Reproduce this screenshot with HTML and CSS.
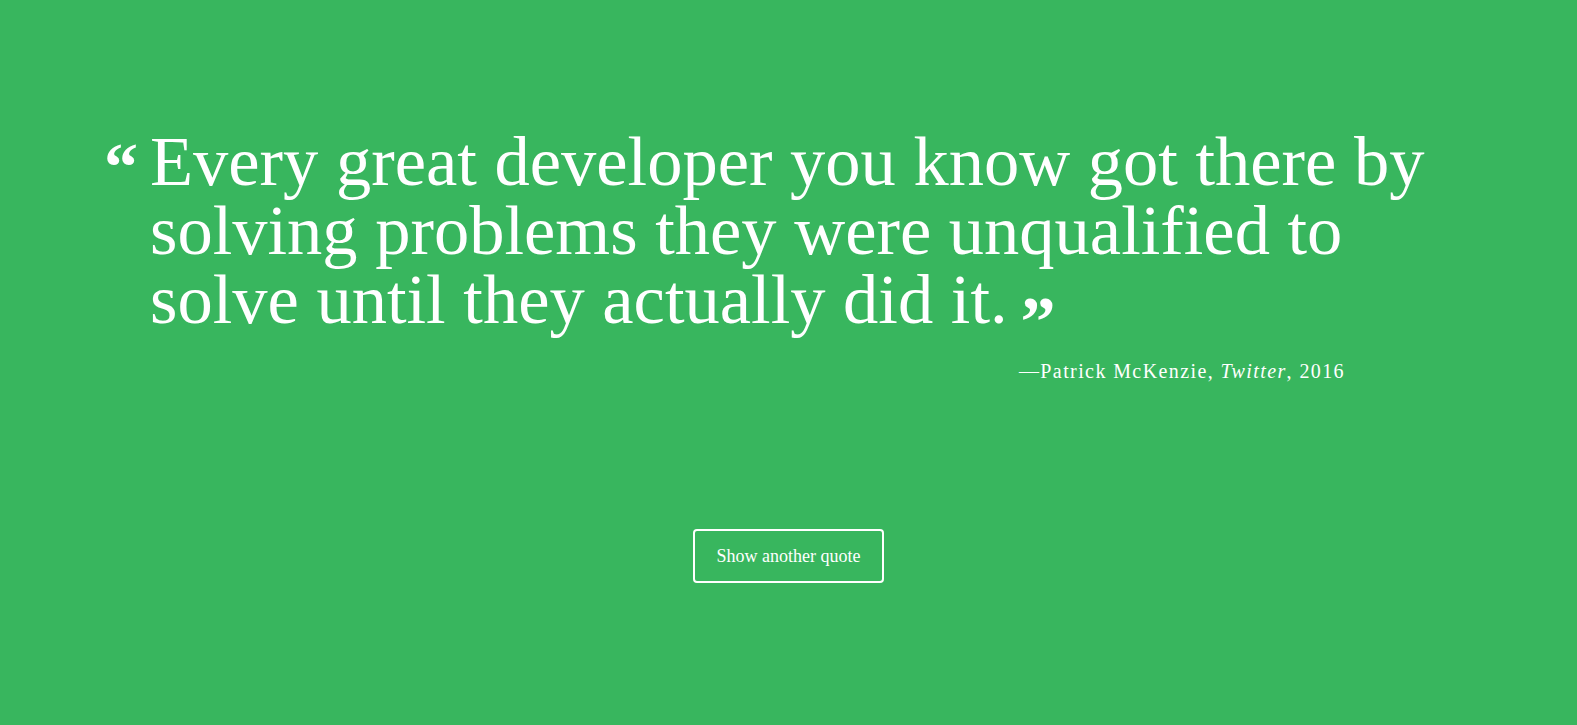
FILE: index.html
```html
<!DOCTYPE html>
<html lang="en">
<head>
<meta charset="utf-8">
<title>Quote</title>
<link rel="stylesheet" href="styles.css">
</head>
<body>
<main class="page">
  <figure class="quote">
    <blockquote class="quote-body">
      <span class="mark mark-open">&ldquo;</span>
      <p class="quote-text">Every great developer you know got there by<br>solving problems they were unqualified to<br>solve until they actually did it.<span class="mark mark-close">&rdquo;</span></p>
    </blockquote>
    <figcaption class="attribution">&mdash;Patrick McKenzie, <cite>Twitter</cite>, 2016</figcaption>
  </figure>
  <div class="actions">
    <button class="btn" type="button">Show another quote</button>
  </div>
</main>
</body>
</html>
```

FILE: styles.css
```css
html, body {
  margin: 0;
  padding: 0;
  height: 100%;
}
body {
  background: #38b65e;
  color: #ffffff;
  font-family: "Liberation Serif", "Times New Roman", serif;
}
.page {
  min-height: 100%;
  display: flex;
  flex-direction: column;
  align-items: center;
}
.quote {
  margin: 0;
  padding: 127px 232px 0 104px;
  align-self: stretch;
}
.quote-body {
  margin: 0;
  display: flex;
  align-items: flex-start;
}
.mark {
  font-weight: 700;
}
.mark-open {
  font-size: 68px;
  line-height: 1;
  width: 46px;
  flex: none;
  margin-top: 6px;
}
.mark-close {
  font-size: 70px;
  line-height: 0;
  margin-left: 13px;
  vertical-align: -22px;
}
.quote-text {
  margin: 0;
  font-size: 70.5px;
  line-height: 69px;
  white-space: nowrap;
}
.attribution {
  text-align: right;
  font-size: 20px;
  line-height: 23px;
  letter-spacing: 1.4px;
  margin-top: 26px;
}
.attribution cite {
  font-style: italic;
}
.actions {
  margin-top: 146px;
}
.btn {
  font-family: "Liberation Serif", "Times New Roman", serif;
  font-size: 18px;
  color: #ffffff;
  background: transparent;
  border: 2px solid #ffffff;
  border-radius: 4px;
  width: 191px;
  height: 54px;
  padding: 0;
  cursor: pointer;
}
```
